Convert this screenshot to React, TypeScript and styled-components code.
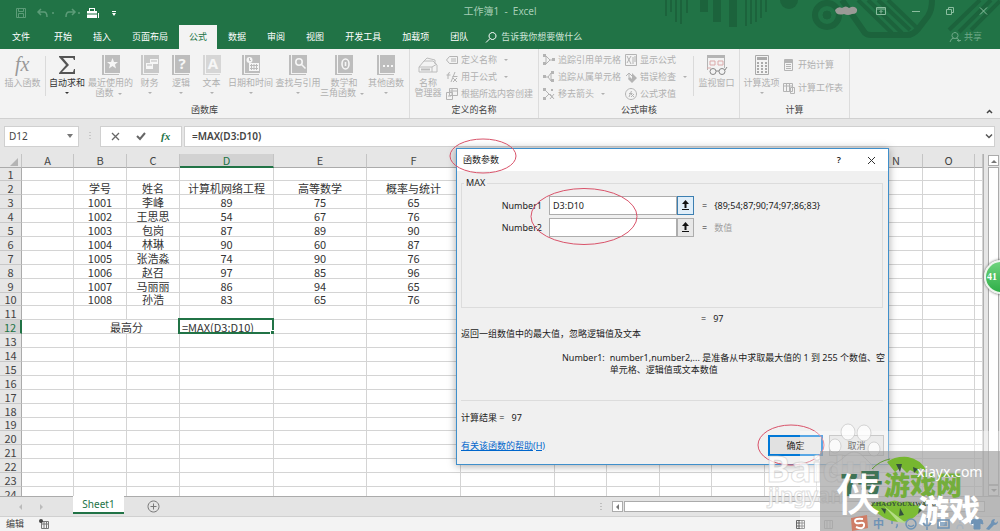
import React from "react";
import styled, { createGlobalStyle, css } from "styled-components";

const ui = `"Noto Sans", "Noto Sans CJK SC", sans-serif`;
const cjk = `"Noto Sans CJK SC", sans-serif`;
const green = "#217346";
const line = "#d4d4d4";

const Global = createGlobalStyle`
  * { box-sizing: border-box; }
  body { margin: 0; background: #e6e6e6; font: 9px/12px ${ui}; color: #222; overflow: hidden; }
  button, input { font: inherit; color: inherit; padding: 0; margin: 0; border: 0; background: none; border-radius: 0; outline: 0; }
  svg { display: block; flex: none; overflow: visible; }
`;

const Page = styled.div`
  position: relative;
  display: flex;
  flex-direction: column;
  height: 100vh;
  overflow: hidden;
`;

/* ---------- header ---------- */
const Header = styled.header`
  position: relative;
  background: ${green};
  color: #fff;
`;
const Decor = styled.svg`
  position: absolute;
  top: 0;
  right: 0;
  overflow: hidden;
`;
const TitleRow = styled.div`
  position: relative;
  display: grid;
  grid-template-columns: 1fr auto 1fr;
  align-items: center;
  height: 25px;
`;
const QuickBar = styled.div`
  display: flex;
  align-items: center;
  gap: 6px;
  padding-left: 15px;
`;
const Title = styled.h1`
  margin: 0;
  padding-bottom: 4px;
  font: 10px/14px ${ui};
  color: #a6cdb5;
  white-space: pre;
`;
const WindowBar = styled.div`
  display: flex;
  justify-content: flex-end;
  align-items: center;
  gap: 24px;
  padding: 0 12px 4px 0;
`;
const Scribble = styled.svg`
  margin-right: -6px;
`;
const IconButton = styled.button`
  display: flex;
  align-items: center;
  justify-content: center;
`;
const Tabs = styled.nav`
  position: relative;
  display: flex;
  gap: 1px;
  height: 24px;
  padding: 0 16px 0 2px;
`;
const Tab = styled.button<{ $active?: boolean; $file?: boolean }>`
  padding: 0 10px;
  white-space: nowrap;
  ${(p) => p.$file && css`margin-right: 3px;`}
  ${(p) => p.$active && css`background: #f3f3f3; color: ${green};`}
`;
const Tell = styled(Tab)`
  display: flex;
  align-items: center;
  gap: 4px;
  padding: 0 6px;
  color: #cfe5d8;
`;
const Share = styled(Tell)`
  margin-left: auto;
  padding: 0 2px;
  gap: 3px;
  color: #6fa988;
`;

/* ---------- ribbon ---------- */
const Ribbon = styled.div`
  display: flex;
  height: 70px;
  flex: none;
  background: #f3f3f3;
  border-bottom: 1px solid #d0d0d0;
  color: #b0b0b0;
`;
const Group = styled.section<{ $w: number }>`
  display: flex;
  flex-direction: column;
  width: ${(p) => p.$w}px;
  flex: none;
  border-right: 1px solid #dcdcdc;
`;
const Tools = styled.div<{ $pad?: number }>`
  display: flex;
  height: 55px;
  padding-left: ${(p) => p.$pad ?? 0}px;
`;
const GroupName = styled.div`
  text-align: center;
  color: #444;
`;
const Big = styled.button<{ $w: number; $on?: boolean }>`
  display: flex;
  flex-direction: column;
  align-items: center;
  flex: none;
  width: ${(p) => p.$w}px;
  padding-top: 6px;
  line-height: 10px;
  white-space: nowrap;
  color: ${(p) => (p.$on ? "#333" : "inherit")};
  svg { margin-bottom: 3px; }
`;
const Caret = styled.i`
  display: inline-block;
  margin: 4px;
  border: 2px solid transparent;
  border-top-color: currentColor;
  border-bottom: 0;
  vertical-align: middle;
`;
const Rule = styled.div`
  flex: none;
  width: 1px;
  height: 40px;
  margin-top: 7px;
  background: #dadada;
`;
const Stack = styled.div<{ $gap?: number; $top?: number; $w: number }>`
  display: flex;
  flex-direction: column;
  gap: ${(p) => p.$gap ?? 1}px;
  padding-top: ${(p) => p.$top ?? 3}px;
  width: ${(p) => p.$w}px;
  flex: none;
`;
const Small = styled.button`
  display: flex;
  align-items: center;
  gap: 3px;
  height: 16px;
  white-space: nowrap;
`;
const Collapse = styled(IconButton)`
  margin: 58px 6px 0 auto;
  height: 9px;
`;

/* ---------- formula bar ---------- */
const FormulaRow = styled.div`
  display: flex;
  align-items: center;
  height: 35px;
  flex: none;
  padding: 0 5px 1px 4px;
`;
const WhiteBox = styled.div<{ $w?: number }>`
  display: flex;
  align-items: center;
  height: 21px;
  background: #fff;
  border: 1px solid #d0d0d0;
  ${(p) => (p.$w ? css`width: ${p.$w}px; flex: none;` : css`flex: 1;`)}
`;
const NameInput = styled.input`
  width: 62px;
  padding-left: 4px;
  font-size: 10px;
  color: #444;
`;
const FormulaInput = styled.input`
  flex: 1;
  padding-left: 7px;
  font-size: 10px;
  font-weight: 600;
  color: #444;
`;
const Dots = styled.div`
  width: 21px;
  display: flex;
  justify-content: center;
`;
const Marks = styled(WhiteBox)`
  justify-content: space-around;
  margin-right: 2px;
  padding: 0 2px;
`;

/* ---------- sheet ---------- */
const SheetArea = styled.main`
  display: flex;
  flex: 1;
  min-height: 0;
  overflow: hidden;
`;
const GridClip = styled.div`
  flex: 1;
  overflow: hidden;
  border-right: 1px solid #b0b0b0;
`;
const Grid = styled.table`
  width: 100%;
  table-layout: fixed;
  border-collapse: separate;
  border-spacing: 0;
  font: 11px/12px ${cjk};
  color: #333;
`;
const HeadCell = styled.th<{ $on?: boolean }>`
  height: 14px;
  padding: 0;
  font-weight: 400;
  line-height: 11px;
  color: ${(p) => (p.$on ? green : "#444")};
  background: ${(p) => (p.$on ? "#d2d2d2" : "#e6e6e6")};
  border-right: 1px solid #c4c4c4;
  border-bottom: ${(p) => (p.$on ? `2px solid ${green}` : "1px solid #ababab")};
`;
const Row = styled.tr`
  height: 14px;
  &:nth-child(9n + 1) { height: 13px; }
`;
const RowHead = styled.th<{ $on?: boolean }>`
  padding: 0;
  font-weight: 400;
  color: ${(p) => (p.$on ? green : "#444")};
  background: ${(p) => (p.$on ? "#d2d2d2" : "#e6e6e6")};
  border-bottom: 1px solid #c8c8c8;
  border-right: ${(p) => (p.$on ? `2px solid ${green}` : "1px solid #ababab")};
`;
const Cell = styled.td<{ $sel?: boolean }>`
  position: relative;
  padding: 0;
  text-align: center;
  white-space: nowrap;
  background: #fff;
  border-right: 1px solid ${line};
  border-bottom: 1px solid ${line};
  ${(p) => p.$sel && css`
    padding-left: 2px;
    text-align: left;
    &::before { content: ""; position: absolute; inset: -2px -1px -1px -2px; border: 2px solid ${green}; }
    &::after { content: ""; position: absolute; right: -2px; bottom: -2px; width: 4px; height: 4px; background: ${green}; border: solid #fff; border-width: 1px 0 0 1px; }
  `}
`;
const VScroll = styled.div`
  display: flex;
  flex-direction: column;
  width: 16px;
  padding: 1px 3px 0 4px;
`;
const ScrollButton = styled(IconButton)`
  flex: none;
  width: 11px;
  height: 11px;
  background: #fff;
  border: 1px solid #ababab;
`;
const VTrack = styled.div`
  flex: 1;
  width: 11px;
  margin-top: 1px;
  background: #fff;
  border: 1px solid #ababab;
`;
const SheetBar = styled.div`
  display: flex;
  align-items: center;
  height: 21px;
  flex: none;
  padding-right: 15px;
  border-top: 1px solid #ababab;
  border-bottom: 1px solid #d0d0d0;
  background: #e4e4e4;
`;
const Arrows = styled.div`
  display: flex;
  gap: 15px;
  width: 73px;
  padding-left: 18px;
`;
const SheetTab = styled.button`
  width: 51px;
  height: 18px;
  margin-top: -3px;
  font-size: 10px;
  background: #fff;
  color: ${green};
  border-bottom: 2px solid ${green};
`;
const AddSheet = styled(IconButton)`
  margin: 0 auto 0 23px;
`;
const HScroll = styled.div`
  display: flex;
  width: 373px;
  margin-left: 10px;
`;
const HTrack = styled.div`
  flex: 1;
  margin-left: 1px;
  background: #fff;
  border: 1px solid #ababab;
`;
const Status = styled.footer`
  display: flex;
  align-items: center;
  gap: 15px;
  height: 14px;
  flex: none;
  padding: 0 4px 0 6px;
  background: #f3f3f3;
  color: #444;
`;
const Tray = styled.div`
  display: flex;
  align-items: center;
  gap: 17px;
  width: 201px;
  margin-left: auto;
`;

/* ---------- dialog ---------- */
const Dialog = styled.form`
  position: absolute;
  left: 456px;
  top: 148px;
  width: 433px;
  height: 317px;
  display: flex;
  flex-direction: column;
  background: #f0f0f0;
  border: 1px solid #3f8fcb;
  box-shadow: 0 1px 8px rgba(0, 0, 0, 0.35);
`;
const DialogTitle = styled.div`
  display: flex;
  align-items: center;
  height: 22px;
  padding: 0 12px 0 6px;
  background: #fff;
  h2 { margin: 0 auto 0 0; font: 9px/12px ${ui}; }
`;
const HelpMark = styled.button`
  font-weight: 600;
  margin-right: 26px;
`;
const Args = styled.fieldset`
  margin: 6px 5px 0 4px;
  padding: 7px 0 0;
  height: 131px;
  min-width: 0;
  border: 1px solid #dcdcdc;
  legend { margin-left: 2px; padding: 0 2px; }
`;
const ArgRow = styled.div`
  display: flex;
  align-items: center;
  height: 19px;
  margin-bottom: 3px;
  label { width: 87px; padding-right: 7px; text-align: right; }
`;
const ArgInput = styled.input`
  width: 128px;
  height: 19px;
  padding-left: 3px;
  background: #fff;
  border: 1px solid #adadad;
`;
const PickButton = styled(IconButton)<{ $hot?: boolean }>`
  width: 17px;
  height: 19px;
  background: ${(p) => (p.$hot ? "#e0eef9" : "#e8e8e8")};
  border: 1px solid ${(p) => (p.$hot ? "#3c7fb1" : "#adadad")};
`;
const Value = styled.output<{ $dim?: boolean }>`
  padding-left: 8px;
  white-space: pre;
  color: ${(p) => (p.$dim ? "#a0a0a0" : "inherit")};
  i { font-style: normal; color: #222; padding-right: 7px; }
`;
const Total = styled.div`
  padding: 5px 0 0 244px;
  white-space: pre;
`;
const Text = styled.p`
  margin: 3px 0 12px 4px;
`;
const Hint = styled.dl`
  display: flex;
  gap: 5px;
  margin: 0 0 0 105px;
  height: 48px;
  dt, dd { margin: 0; }
`;
const Result = styled.div`
  margin: 0 5px 0 4px;
  padding-top: 11px;
  border-top: 1px solid #dcdcdc;
  white-space: pre;
`;
const Actions = styled.div`
  display: flex;
  align-items: center;
  gap: 6px;
  padding: 11px 4px 0;
  a { margin-right: auto; color: #0066cc; }
`;
const ActionButton = styled.button<{ $main?: boolean }>`
  width: 55px;
  height: 21px;
  background: #e1e1e1;
  border: ${(p) => (p.$main ? "2px solid #0078d7" : "1px solid #adadad")};
`;

/* ---------- overlays ---------- */
const Rings = styled.svg`
  position: absolute;
  left: 440px;
  top: 130px;
  pointer-events: none;
`;
const Ball = styled.div`
  position: absolute;
  right: -18px;
  top: 260px;
  width: 34px;
  height: 34px;
  padding-left: 1px;
  border: 2px solid #eef5ee;
  border-radius: 50%;
  background: linear-gradient(#6fd47e, #2fae48);
  box-shadow: 0 0 3px #555;
  color: #fff;
  font: 700 10px/30px "Liberation Serif", serif;
`;
const Mark = styled.div`
  position: absolute;
  right: 0;
  bottom: 0;
  width: 240px;
  height: 110px;
  overflow: hidden;
  pointer-events: none;
`;
const Veil = styled.div<{ $w: number; $h: number; $c: string }>`
  position: absolute;
  right: 0;
  bottom: 0;
  width: ${(p) => p.$w}px;
  height: ${(p) => p.$h}px;
  background: ${(p) => p.$c};
`;
const Word = styled.span<{ $x: number; $y: number; $s: number; $c: string; $f?: string; $b?: number }>`
  position: absolute;
  left: ${(p) => p.$x}px;
  top: ${(p) => p.$y}px;
  font: ${(p) => p.$b ?? 400} ${(p) => p.$s}px/${(p) => p.$s}px ${(p) => p.$f ?? ui};
  color: ${(p) => p.$c};
  white-space: nowrap;
`;
const Ghost = styled(Word)`
  -webkit-text-stroke: 1px rgba(190, 190, 190, 0.5);
`;
const Layer = styled.svg`
  position: absolute;
  inset: 0;
`;

/* ---------- icons ---------- */
const Book = ({ children, c = "#bdbdbd" }: { children?: React.ReactNode; c?: string }) => (
  <svg width="18" height="20" viewBox="0 0 18 20">
    <path d="M0 0h2v20H0zM3 0h15v18H3zM1 19h16v1H1z" fill={c} />
    <g fill="#f6f6f6">{children}</g>
  </svg>
);
const Glyph = ({ t, s = 15 }: { t: string; s?: number }) => (
  <text x="10" y="14" textAnchor="middle" fontFamily="Noto Sans" fontWeight="700" fontSize={s}>{t}</text>
);
const SmallIcon = ({ d, fill }: { d: string; fill?: string }) => (
  <svg width="12" height="12" viewBox="0 0 12 12" fill="none" stroke="#b4b4b4">
    <path d={d} />
    {fill && <path d={fill} fill="#b4b4b4" stroke="none" />}
  </svg>
);
const Stroke = ({ d, w = 12, h = 12, c = "currentColor", sw = 1 }: { d: string; w?: number; h?: number; c?: string; sw?: number }) => (
  <svg width={w} height={h} viewBox={`0 0 ${w} ${h}`} fill="none" stroke={c} strokeWidth={sw}>
    <path d={d} />
  </svg>
);
const Tri = ({ d, c = "#777" }: { d: string; c?: string }) => (
  <svg width="6" height="6" viewBox="0 0 6 6"><path d={d} fill={c} /></svg>
);
const PickArrow = () => (
  <svg width="9" height="11"><path d="M4.500 0L8 4H5.500v4h-2V4H1zM1 9h7v1H1z" fill="#111" /></svg>
);

/* ---------- data ---------- */
const cols = [52, 53, 53, 94, 93, 94, 94, 52, 53, 52, 53, 52, 53, 53, 52];
const letters = "ABCDEFGHIJKLMNO".split("");
const cells: Record<number, string[]> = {
  2: ["", "学号", "姓名", "计算机网络工程", "高等数学", "概率与统计"],
  3: ["", "1001", "李峰", "89", "75", "65"],
  4: ["", "1002", "王思思", "54", "67", "76"],
  5: ["", "1003", "包岗", "87", "89", "90"],
  6: ["", "1004", "林琳", "90", "60", "87"],
  7: ["", "1005", "张浩淼", "74", "90", "76"],
  8: ["", "1006", "赵召", "97", "85", "96"],
  9: ["", "1007", "马丽丽", "86", "94", "65"],
  10: ["", "1008", "孙浩", "83", "65", "76"],
};
const tabs = ["文件", "开始", "插入", "页面布局", "公式", "数据", "审阅", "视图", "开发工具", "加载项", "团队"];

const RibbonBar = () => (
  <Ribbon>
    <Group $w={410}>
      <Tools>
        <Big $w={45}>
          <svg width="20" height="20"><text x="2" y="16" fontFamily="Liberation Serif" fontStyle="italic" fontSize="20" fill="#999">fx</text></svg>
          插入函数
        </Big>
        <Rule />
        <Big $w={42} $on>
          <svg width="18" height="20"><path d="M1 1h16v4h-1l-1-2H5l6 7-7 7h11l1-3h1v5H1v-1l7-8-7-8z" fill="#555" /></svg>
          自动求和<Caret />
        </Big>
        <Big $w={45}><Book><path d="M10.500 3l1.500 4h4l-3 2.500 1 4-3.500-2.500L7 13.500l1-4L5 7h4z" /></Book>最近使用的<span>函数<Caret /></span></Big>
        <Big $w={33}><Book c="#c8c8c8"><path d="M9 4h8v5H9zM5 8h7v6H5z" /><path d="M6 10h5M10 6h6" stroke="#bbb" /></Book>财务<Caret /></Big>
        <Big $w={30}><Book><Glyph t="?" /></Book>逻辑<Caret /></Big>
        <Big $w={31}><Book c="#d6d6d6"><Glyph t="A" /></Book>文本<Caret /></Big>
        <Big $w={47}><Book><circle cx="7.500" cy="5" r="3" /><path d="M7 8h10v8H7z" /><path d="M8 10.500h8M8 13.500h8M9.500 9v6M12 9v6M14.500 9v6M7.500 3v2.500H9" stroke="#bbb" fill="none" /></Book>日期和时间<Caret /></Big>
        <Big $w={48}><Book><g fill="none" stroke="#f6f6f6" strokeWidth="1.600"><circle cx="10" cy="7" r="3.200" /><path d="M12.500 9.500l4 4" /></g></Book>查找与引用<Caret /></Big>
        <Big $w={44}><Book><g fill="none" stroke="#f6f6f6" strokeWidth="1.600"><ellipse cx="10.500" cy="9" rx="3.500" ry="5" /><path d="M10.500 7v4" /></g></Book>数学和<span>三角函数<Caret /></span></Big>
        <Big $w={40}><Book><path d="M6 10h2v2H6zM10 10h2v2h-2zM14 10h2v2h-2z" /></Book>其他函数<Caret /></Big>
      </Tools>
      <GroupName>函数库</GroupName>
    </Group>
    <Group $w={129}>
      <Tools>
        <Big $w={36}>
          <svg width="20" height="20" fill="none" stroke="#bcbcbc"><path d="M1 12l5-6h9l4 4v7H1zM1 12h13v5M14 12l5-3M5 7l4-4 8 2v4" /><path d="M3 14.500h9" strokeWidth="2" /></svg>
          名称<span>管理器</span>
        </Big>
        <Stack $w={90}>
          <Small><SmallIcon d="M3.500 2.500h8v7h-8l-3-3.500zM5 5h5M5 7h5" />定义名称<Caret /></Small>
          <Small><SmallIcon d="M4 1.500Q2 1.500 2 4v4M0.500 4h4M5 11L9 1M6.500 5.500h5M7 7l4 4M11 7l-4 4" />用于公式<Caret /></Small>
          <Small><SmallIcon d="M3.500 0.500h8v7h-8zM3.500 3h8M6 1v6M0.500 4.500h6v7h-6zM2 8h3" />根据所选内容创建</Small>
        </Stack>
      </Tools>
      <GroupName>定义的名称</GroupName>
    </Group>
    <Group $w={201}>
      <Tools $pad={4}>
        <Stack $w={82}>
          <Small><SmallIcon d="M3 2l4 4-4 4M3 2v8M7 6h2" fill="M0 0h3v3H0zM0 8h3v3H0zM9 4h3v3H9z" />追踪引用单元格</Small>
          <Small><SmallIcon d="M3 6h3M8 2L5 6l3 4M8 2v8" fill="M0 4h3v3H0zM8 0h3v3H8zM8 8h3v3H8z" />追踪从属单元格</Small>
          <Small><SmallIcon d="M2 2l8 8M2 10l4-4M7 6l4 5M11 6l-4 5" fill="M0 0h3v3H0zM0 9h3v3H0zM8 1h2v2H8z" />移去箭头<Caret /></Small>
        </Stack>
        <Stack $w={68}>
          <Small><SmallIcon d="M0.500 0.500h11v11h-11zM2 2l4 8M6 2L2 9M8 3v7M10 2v6" />显示公式</Small>
          <Small><SmallIcon d="M1 5l3-3 3 3M4 2v6" fill="M7 2l5 5-5 5-4-4 2-2 2 2z" />错误检查<Caret /></Small>
          <Small><SmallIcon d="M6 0.500a5.500 5.500 0 1 0 .01 0M4 9l2.500-6M4 5.500h3.500M6 6l3 3M9 6L6 9" />公式求值</Small>
        </Stack>
        <Rule />
        <Big $w={45}>
          <svg width="22" height="20" fill="none" stroke="#b4b4b4"><path d="M1.500 1v14M18.500 1v12" /><path d="M1 1.500h18" strokeWidth="3" /><path d="M4 6h5v4H4zM12 6h5v4h-5zM1 13h4" stroke="#dba9a9" /><circle cx="7" cy="16.500" r="3" stroke="#888" /><circle cx="16" cy="16.500" r="3" stroke="#888" /><path d="M10 16h3M19 15l2-3" stroke="#888" /></svg>
          监视窗口
        </Big>
      </Tools>
      <GroupName>公式审核</GroupName>
    </Group>
    <Group $w={110}>
      <Tools>
        <Big $w={43}>
          <svg width="16" height="20" fill="none" stroke="#aaa"><path d="M1.500 0.500h13v19h-13z" /><path d="M3 3.500h10" strokeWidth="3" /><path d="M3 8h10M3 11h10M3 14h10M3 17h10" strokeWidth="2" strokeDasharray="2 2" /></svg>
          计算选项<Caret />
        </Big>
        <Stack $w={64} $gap={7} $top={8}>
          <Small><SmallIcon d="M1.500 0.500h8v11h-8zM3 5.500h5M3 7.500h5M3 9.500h5" fill="M2 1h7v3H2z" />开始计算</Small>
          <Small><SmallIcon d="M0.500 1.500h9v8h-9zM0.500 4h9M3.500 2v7M6.500 2v7M7.500 5.500h4v6h-4z" />计算工作表</Small>
        </Stack>
      </Tools>
      <GroupName>计算</GroupName>
    </Group>
    <Collapse aria-label="折叠功能区"><Stroke w={9} h={7} d="M2 5l2.500-2.500L7 5" c="#444" sw={1.5} /></Collapse>
  </Ribbon>
);

export default function App() {
  return (
    <Page>
      <Global />
      <Header>
        <Decor width="340" height="49" viewBox="0 0 340 49" fill="none" stroke="#1c633c">
          <path d="M6 0v16M11 0v12M16 0v22M21 0v24M27 0v13M86 0v26M91 0v24M96 0v22M101 0v18M106 0v12" strokeWidth="2" />
          <path d="M44 0v12M57 0v22M73 0v27" strokeWidth="8" />
          <circle cx="129" cy="0" r="9" fill="#1c633c" stroke="none" />
          <circle cx="167" cy="15" r="12" strokeWidth="6" />
          <circle cx="167" cy="15" r="4" fill="#1c633c" />
          <path d="M182 0l23 33q2 2 6 2h36q6 0 11-6l10-13q4-6 4-16" strokeWidth="6" />
          <path d="M198 0l34 33M208 0l34 33M218 0l32 30M228 0l28 27M289 30l31-30M299 32l32-32M311 30l29-29" strokeWidth="4" />
        </Decor>
        <TitleRow>
          <QuickBar>
            <IconButton aria-label="保存"><Stroke d="M1.500 1.500h9v9h-9zM3.500 1.500v3h5v-3M3.500 10.500v-4h5v4" c="#5c9c78" /></IconButton>
            <IconButton aria-label="撤消"><Stroke w={20} d="M8 2L5 5l3 3M5.500 5H11q3 0 3 5M19 6h2" c="#5c9c78" sw={1.5} /></IconButton>
            <IconButton aria-label="恢复"><Stroke w={18} d="M13 2l3 3-3 3M15.500 5H10Q7 5 7 10M19 6h2" c="#5c9c78" sw={1.5} /></IconButton>
            <IconButton aria-label="工具箱"><svg width="14" height="12"><path d="M4 4h10v7H4zM6 4V1h6v3h-1V2H7v2zM15 6h1v5h-1z" fill="#fff" /><path d="M4 7h10" stroke={green} /></svg></IconButton>
            <IconButton aria-label="自定义"><svg width="14" height="8"><path d="M9 2h4v1H9zM9 4h4l-2 3z" fill="#fff" /></svg></IconButton>
          </QuickBar>
          <Title>工作簿1  -  Excel</Title>
          <WindowBar>
            <Scribble width="22" height="10"><path d="M0 4q3-4 7-2 4-3 7 0 5-3 8 1 1 5-5 5-4 2-8 0-8 2-9-4z" fill="#9a9a96" /></Scribble>
            <IconButton aria-label="功能区显示选项"><Stroke d="M1.500 2.500h9v7h-9zM1.500 4h9M6 8.500V5.500M4.500 7L6 5.500 7.500 7" c="#8abd9f" /></IconButton>
            <IconButton aria-label="最小化"><Stroke w={10} d="M1 6.500h8" c="#8abd9f" /></IconButton>
            <IconButton aria-label="还原"><Stroke w={10} d="M1.500 4.500h5v5h-5zM3.500 4.500v-2h5v5h-2" c="#8abd9f" /></IconButton>
            <IconButton aria-label="关闭"><Stroke w={9} d="M1 2.500l7 7M8 2.500l-7 7" c="#8abd9f" /></IconButton>
          </WindowBar>
        </TitleRow>
        <Tabs>
          {tabs.map((t) => <Tab key={t} $active={t === "公式"} $file={t === "文件"}>{t}</Tab>)}
          <Tell><Stroke d="M7.500 1.500a3.500 3.500 0 1 0 .01 0M5 7.500L1 11.500" c="#fff" />告诉我你想要做什么</Tell>
          <Share><Stroke d="M6 1.500a3 3 0 1 0 .01 0M1 11q1-4 4-4M7 7q3 0 3 4M8 9.500h4" />共享</Share>
        </Tabs>
      </Header>

      <RibbonBar />

      <FormulaRow>
        <WhiteBox $w={75}>
          <NameInput aria-label="名称框" defaultValue="D12" />
          <IconButton aria-label="名称列表"><Tri d="M0 1h6L3 5z" /></IconButton>
        </WhiteBox>
        <Dots><svg width="2" height="12"><path d="M1 2v9" stroke="#aaa" strokeDasharray="1 2" /></svg></Dots>
        <Marks $w={82}>
          <IconButton aria-label="取消"><Stroke d="M2 3l7 7M9 3l-7 7" c="#666" sw={1.3} /></IconButton>
          <IconButton aria-label="输入"><Stroke d="M2 6l3 3 5-6" c="#666" sw={2} /></IconButton>
          <IconButton aria-label="插入函数"><svg width="12" height="14"><text x="1" y="11" fontFamily="Liberation Serif" fontStyle="italic" fontWeight="700" fontSize="11" fill={green}>fx</text></svg></IconButton>
        </Marks>
        <WhiteBox>
          <FormulaInput aria-label="编辑栏" defaultValue="=MAX(D3:D10)" />
          <IconButton aria-label="展开编辑栏"><Stroke w={10} h={8} d="M2 2.500l3 3 3-3" c="#555" sw={1.5} /></IconButton>
        </WhiteBox>
      </FormulaRow>

      <SheetArea>
        <GridClip>
          <Grid>
            <colgroup>
              <col width={22} />
              {cols.map((w, i) => <col key={i} width={w} />)}
              <col />
            </colgroup>
            <thead>
              <tr>
                <HeadCell aria-label="全选"><svg width="20" height="12"><path d="M18 3v8h-8z" fill="#b4b4b4" /></svg></HeadCell>
                {letters.map((l) => <HeadCell key={l} $on={l === "D"}>{l}</HeadCell>)}
                <HeadCell />
              </tr>
            </thead>
            <tbody>
              {Array.from({ length: 24 }, (_, i) => i + 1).map((n) => (
                <Row key={n}>
                  <RowHead $on={n === 12}>{n}</RowHead>
                  {n === 12 ? (
                    <>
                      <Cell />
                      <Cell colSpan={2}>最高分</Cell>
                      <Cell $sel>=MAX(D3:D10)</Cell>
                      {cols.slice(4).map((_, i) => <Cell key={i} />)}
                    </>
                  ) : (
                    cols.map((_, i) => <Cell key={i}>{cells[n]?.[i]}</Cell>)
                  )}
                  <Cell />
                </Row>
              ))}
            </tbody>
          </Grid>
        </GridClip>
        <VScroll>
          <ScrollButton aria-label="向上"><Tri d="M0 5h6L3 2z" /></ScrollButton>
          <VTrack />
          <ScrollButton aria-label="向下"><Tri d="M0 1h6L3 4z" /></ScrollButton>
        </VScroll>
      </SheetArea>

      <SheetBar>
        <Arrows><Tri d="M4 0v6L1 3z" c="#bbb" /><Tri d="M1 0v6l3-3z" c="#bbb" /></Arrows>
        <SheetTab>Sheet1</SheetTab>
        <AddSheet aria-label="新工作表"><Stroke w={13} h={13} d="M6.500 1a5.500 5.500 0 1 0 .01 0M6.500 3.500v6M3.500 6.500h6" c="#777" /></AddSheet>
        <svg width="2" height="10"><path d="M1 1v8" stroke="#999" strokeDasharray="1 2" /></svg>
        <HScroll>
          <ScrollButton aria-label="向左"><Tri d="M4 0v6L1 3z" /></ScrollButton>
          <HTrack />
        </HScroll>
      </SheetBar>
      <Status>
        编辑
        <svg width="10" height="10"><path d="M2.500 2.500h7v7h-7zM3 5h6M5 3v6M7.500 3v6" stroke="#777" fill="none" /><circle cx="2" cy="2" r="2" fill="#444" /></svg>
        <Tray>
          <Stroke w={11} h={11} d="M1.500 1.500h8v8h-8zM1.500 4h8M1.500 7h8M4 1.500v8M7 1.500v8" c="#666" />
          <Stroke w={11} h={11} d="M1.500 1.500h8v8h-8zM4 1.500v8M7 1.500v8" c="#aaa" />
        </Tray>
      </Status>

      <Dialog role="dialog" aria-label="函数参数" onSubmit={(e) => e.preventDefault()}>
        <DialogTitle>
          <h2>函数参数</h2>
          <HelpMark type="button">?</HelpMark>
          <IconButton type="button" aria-label="关闭对话框"><Stroke w={9} h={9} d="M1 1l7 7M8 1L1 8" c="#333" /></IconButton>
        </DialogTitle>
        <Args>
          <legend>MAX</legend>
          <ArgRow>
            <label htmlFor="n1">Number1</label>
            <ArgInput id="n1" defaultValue="D3:D10" />
            <PickButton type="button" $hot aria-label="选择区域 1"><PickArrow /></PickButton>
            <Value><i>=</i>{"{89;54;87;90;74;97;86;83}"}</Value>
          </ArgRow>
          <ArgRow>
            <label htmlFor="n2">Number2</label>
            <ArgInput id="n2" />
            <PickButton type="button" aria-label="选择区域 2"><PickArrow /></PickButton>
            <Value $dim><i>=</i>数值</Value>
          </ArgRow>
        </Args>
        <Total>=   97</Total>
        <Text>返回一组数值中的最大值，忽略逻辑值及文本</Text>
        <Hint>
          <dt>Number1:</dt>
          <dd>number1,number2,... 是准备从中求取最大值的 1 到 255 个数值、空单元格、逻辑值或文本数值</dd>
        </Hint>
        <Result>计算结果 =   97</Result>
        <Actions>
          <a href="#help">有关该函数的帮助(H)</a>
          <ActionButton $main type="submit">确定</ActionButton>
          <ActionButton type="button">取消</ActionButton>
        </Actions>
      </Dialog>

      <Rings width="400" height="340" viewBox="440 130 400 340" fill="none" stroke="#d9536a">
        <ellipse cx="483" cy="156" rx="33" ry="17" />
        <ellipse cx="584" cy="216.500" rx="53" ry="28" />
        <ellipse cx="791" cy="445" rx="33" ry="20" />
      </Rings>
      <Ball>41</Ball>

      <Mark>
        <Veil $w={200} $h={100} $c="rgba(255,255,255,.35)" />
        <Ghost $x={6} $y={30} $s={36} $b={700} $c="rgba(255,255,255,.75)">Baidu</Ghost>
        <Ghost $x={8} $y={64} $s={21} $b={600} $c="rgba(255,255,255,.75)">jingyan</Ghost>
        <Layer width="240" height="110">
          <g fill="#fff" fillOpacity=".75" stroke="#bbb" strokeOpacity=".6">
            <ellipse cx="88" cy="11" rx="7" ry="8" />
            <ellipse cx="104" cy="12" rx="7" ry="8" />
            <ellipse cx="75" cy="25" rx="6" ry="7" />
            <ellipse cx="114" cy="28" rx="6" ry="7" />
            <path d="M94 31c7 0 10 6 16 11s4 12-6 12-14-2-24 0-12-8-4-12 11-11 18-11z" fillOpacity=".4" />
          </g>
        </Layer>
        <Veil $w={180} $h={80} $c="rgba(155,155,155,.65)" />
        <Layer width="240" height="110">
          <path d="M127 41q8-6 21-5 12 2 19 14l-7-3-2 6-8-4-3 3-6-6-6 5z" fill="#76b72f" />
          <path d="M112 48a33 33 0 0 1 18-10M112 82a33 33 0 0 0 55-4" fill="none" stroke="#5f9a30" />
          <path d="M111 84q9-6 16-2 8-5 14 0 8-4 14 2l8 1q-8 16-24 16-18-1-28-17z" fill="#7cbc35" />
          <path d="M124 85l22 17-8-1z" fill="#b5dd86" />
          <path d="M136 43l6 0-2 8zM153 46l5 2-4 4zM121 87l5 1-1 5zM140 87l4 7-5 1zM159 88l3 1-4 4z" fill="#35513f" />
        </Layer>
        <Word $x={80} $y={47} $s={30} $b={900} $c="#3f7355" $f={cjk}>7</Word>
        <Word $x={97} $y={48} $s={26} $b={900} $c="#3f7355" $f={cjk}>号</Word>
        <Word $x={124} $y={50} $s={26} $b={900} $c="#74ae3c" $f={cjk}>游戏网</Word>
        <Word $x={76} $y={49} $s={44} $b={500} $c="#fff" $f={cjk}>侠</Word>
        <Word $x={111} $y={80} $s={7} $b={700} $c="#38523c" $f={`"Liberation Serif", serif`}>ZHAOYOUXIWANG</Word>
        <Word $x={158} $y={72} $s={31} $b={900} $c="#fff" $f={cjk}>游戏</Word>
        <Word $x={157} $y={44} $s={14} $c="#fff">xiayx.com</Word>
        <Layer width="240" height="110" fill="none" stroke="#6f93b5" strokeWidth="1.500">
          <path d="M91 97l16-3 1 13-16 3z" fill="#cf7d66" stroke="none" />
          <path d="M103 98q-8-1-8 2t5 2 4 3-8 1" stroke="#fff" strokeWidth="2" />
          <path d="M132 100v3M137 103q1 2-1 4" />
          <circle cx="151" cy="103" r="5" />
          <path d="M148 104q3 3 6 0M167 97v7M163 102q4 6 8 0M167 106v3" />
          <path d="M178 99h11v8h-11zM180 102h7M180 104h7" />
          <path d="M200 99v3M197 108q0-4 3-4t3 4" stroke="#a9b4c0" />
          <path d="M212 99l3-1q2 2 4 0l3 1 1 4-3-1v6h-6v-6l-3 1z" fill="#6f93b5" strokeWidth="1" />
          <path d="M226 108l5-6q0-4 4-4l-1 3 2 1 2-2q0 4-4 4l-5 5z" fill="#6f93b5" stroke="none" />
        </Layer>
        <Word $x={113} $y={97} $s={11} $b={700} $c="#6f93b5">中</Word>
      </Mark>
    </Page>
  );
}
